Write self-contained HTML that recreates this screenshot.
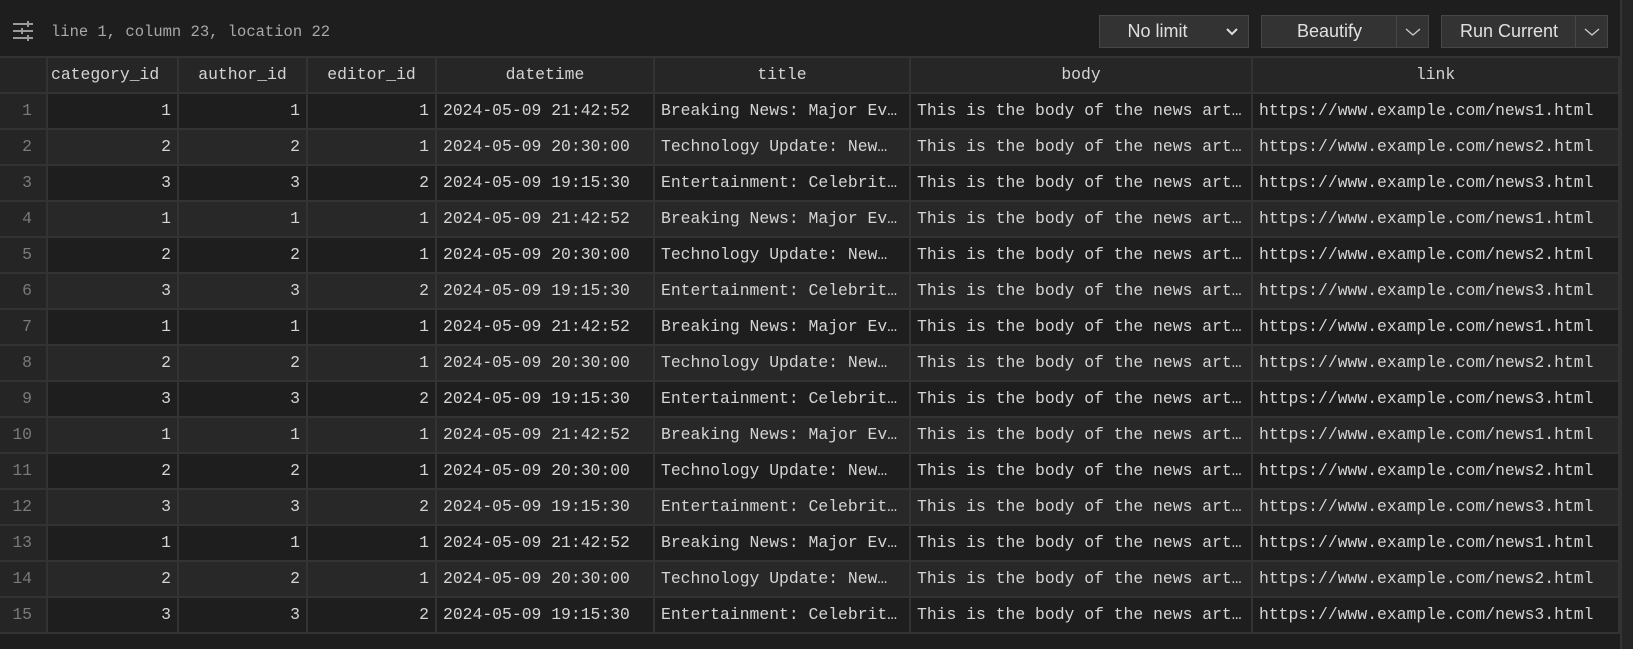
<!DOCTYPE html>
<html><head><meta charset="utf-8"><style>
*{margin:0;padding:0;box-sizing:border-box}
body{width:1633px;height:649px;background:#1e1e1e;position:relative;overflow:hidden;font-family:"Liberation Mono",monospace;color:#d4d4d4}
.side{position:absolute;left:1620px;top:0;width:13px;height:649px;background:#252526;border-left:2px solid #333}
.status{position:absolute;left:51px;top:21px;font-size:15.5px;color:#a8a8a8;line-height:22px}
.btn{position:absolute;top:15px;height:33px;background:#333;border:1px solid #474747;font-family:"Liberation Sans",sans-serif;font-size:18px;color:#e0e0e0;line-height:31px}
.btn span{position:absolute;text-align:center}
.btn .dv{position:absolute;top:0;bottom:0;width:1px;background:#474747}
.grid{position:absolute;left:0;top:56px;width:1620px;border-top:2px solid #333}
.row{position:relative;height:36px;border-bottom:2px solid #333;font-size:16.4px;line-height:34px;white-space:pre}
.row div{position:absolute;top:0;height:34px;border-right:2px solid #333;overflow:hidden;padding:0 6px}
.hd{background:#262626;height:36px}
.hd div{text-align:center}
.o{background:#1e1e1e}.e{background:#282828}
.row .g{left:0;width:48px;background:#252526;color:#7a7a7a;text-align:right;padding-right:14px}
.c1{left:48px;width:131px}.c2{left:179px;width:129px}.c3{left:308px;width:129px}
.c4{left:437px;width:218px}.c5{left:655px;width:256px}.c6{left:911px;width:342px}.c7{left:1253px;width:367px}
.r{text-align:right}
</style></head><body>
<div class="side"></div>
<svg style="position:absolute;left:12px;top:20px" width="22" height="22" viewBox="0 0 22 22">
<g stroke="#9a9a9a" stroke-width="2"><line x1="1" y1="4" x2="21" y2="4"/><line x1="1" y1="11" x2="21" y2="11"/><line x1="1" y1="18" x2="21" y2="18"/>
<line x1="16" y1="1" x2="16" y2="7"/><line x1="10" y1="8" x2="10" y2="14"/><line x1="16" y1="15" x2="16" y2="21"/></g></svg>
<div class="status">line 1, column 23, location 22</div>
<div class="btn" style="left:1099px;width:150px"><span style="left:10px;width:95px">No limit</span>
<svg style="position:absolute;left:126px;top:11px" width="12" height="10"><polyline points="1,2 6,7 11,2" fill="none" stroke="#ddd" stroke-width="2"/></svg></div>
<div class="btn" style="left:1261px;width:168px"><span style="left:0;width:135px">Beautify</span><div class="dv" style="left:134px"></div>
<svg style="position:absolute;left:143px;top:11px" width="16" height="10"><polyline points="1,2 8,8 15,2" fill="none" stroke="#ccc" stroke-width="1.3"/></svg></div>
<div class="btn" style="left:1441px;width:167px"><span style="left:0;width:134px">Run Current</span><div class="dv" style="left:133px"></div>
<svg style="position:absolute;left:142px;top:11px" width="16" height="10"><polyline points="1,2 8,8 15,2" fill="none" stroke="#ccc" stroke-width="1.3"/></svg></div>

<div class="grid">
<div class="row hd"><div class="g" style="background:#252526"></div><div class="c1" style="text-align:left;padding-left:3px">category_id</div><div class="c2">author_id</div><div class="c3">editor_id</div><div class="c4">datetime</div><div class="c5">title</div><div class="c6">body</div><div class="c7">link</div></div>
<div class="row o"><div class="g">1</div><div class="c1 r">1</div><div class="c2 r">1</div><div class="c3 r">1</div><div class="c4">2024-05-09 21:42:52</div><div class="c5">Breaking News: Major Ev…</div><div class="c6">This is the body of the news art…</div><div class="c7">https://www.example.com/news1.html</div></div>
<div class="row e"><div class="g">2</div><div class="c1 r">2</div><div class="c2 r">2</div><div class="c3 r">1</div><div class="c4">2024-05-09 20:30:00</div><div class="c5">Technology Update: New…</div><div class="c6">This is the body of the news art…</div><div class="c7">https://www.example.com/news2.html</div></div>
<div class="row o"><div class="g">3</div><div class="c1 r">3</div><div class="c2 r">3</div><div class="c3 r">2</div><div class="c4">2024-05-09 19:15:30</div><div class="c5">Entertainment: Celebrit…</div><div class="c6">This is the body of the news art…</div><div class="c7">https://www.example.com/news3.html</div></div>
<div class="row e"><div class="g">4</div><div class="c1 r">1</div><div class="c2 r">1</div><div class="c3 r">1</div><div class="c4">2024-05-09 21:42:52</div><div class="c5">Breaking News: Major Ev…</div><div class="c6">This is the body of the news art…</div><div class="c7">https://www.example.com/news1.html</div></div>
<div class="row o"><div class="g">5</div><div class="c1 r">2</div><div class="c2 r">2</div><div class="c3 r">1</div><div class="c4">2024-05-09 20:30:00</div><div class="c5">Technology Update: New…</div><div class="c6">This is the body of the news art…</div><div class="c7">https://www.example.com/news2.html</div></div>
<div class="row e"><div class="g">6</div><div class="c1 r">3</div><div class="c2 r">3</div><div class="c3 r">2</div><div class="c4">2024-05-09 19:15:30</div><div class="c5">Entertainment: Celebrit…</div><div class="c6">This is the body of the news art…</div><div class="c7">https://www.example.com/news3.html</div></div>
<div class="row o"><div class="g">7</div><div class="c1 r">1</div><div class="c2 r">1</div><div class="c3 r">1</div><div class="c4">2024-05-09 21:42:52</div><div class="c5">Breaking News: Major Ev…</div><div class="c6">This is the body of the news art…</div><div class="c7">https://www.example.com/news1.html</div></div>
<div class="row e"><div class="g">8</div><div class="c1 r">2</div><div class="c2 r">2</div><div class="c3 r">1</div><div class="c4">2024-05-09 20:30:00</div><div class="c5">Technology Update: New…</div><div class="c6">This is the body of the news art…</div><div class="c7">https://www.example.com/news2.html</div></div>
<div class="row o"><div class="g">9</div><div class="c1 r">3</div><div class="c2 r">3</div><div class="c3 r">2</div><div class="c4">2024-05-09 19:15:30</div><div class="c5">Entertainment: Celebrit…</div><div class="c6">This is the body of the news art…</div><div class="c7">https://www.example.com/news3.html</div></div>
<div class="row e"><div class="g">10</div><div class="c1 r">1</div><div class="c2 r">1</div><div class="c3 r">1</div><div class="c4">2024-05-09 21:42:52</div><div class="c5">Breaking News: Major Ev…</div><div class="c6">This is the body of the news art…</div><div class="c7">https://www.example.com/news1.html</div></div>
<div class="row o"><div class="g">11</div><div class="c1 r">2</div><div class="c2 r">2</div><div class="c3 r">1</div><div class="c4">2024-05-09 20:30:00</div><div class="c5">Technology Update: New…</div><div class="c6">This is the body of the news art…</div><div class="c7">https://www.example.com/news2.html</div></div>
<div class="row e"><div class="g">12</div><div class="c1 r">3</div><div class="c2 r">3</div><div class="c3 r">2</div><div class="c4">2024-05-09 19:15:30</div><div class="c5">Entertainment: Celebrit…</div><div class="c6">This is the body of the news art…</div><div class="c7">https://www.example.com/news3.html</div></div>
<div class="row o"><div class="g">13</div><div class="c1 r">1</div><div class="c2 r">1</div><div class="c3 r">1</div><div class="c4">2024-05-09 21:42:52</div><div class="c5">Breaking News: Major Ev…</div><div class="c6">This is the body of the news art…</div><div class="c7">https://www.example.com/news1.html</div></div>
<div class="row e"><div class="g">14</div><div class="c1 r">2</div><div class="c2 r">2</div><div class="c3 r">1</div><div class="c4">2024-05-09 20:30:00</div><div class="c5">Technology Update: New…</div><div class="c6">This is the body of the news art…</div><div class="c7">https://www.example.com/news2.html</div></div>
<div class="row o"><div class="g">15</div><div class="c1 r">3</div><div class="c2 r">3</div><div class="c3 r">2</div><div class="c4">2024-05-09 19:15:30</div><div class="c5">Entertainment: Celebrit…</div><div class="c6">This is the body of the news art…</div><div class="c7">https://www.example.com/news3.html</div></div>
</div>
</body></html>
